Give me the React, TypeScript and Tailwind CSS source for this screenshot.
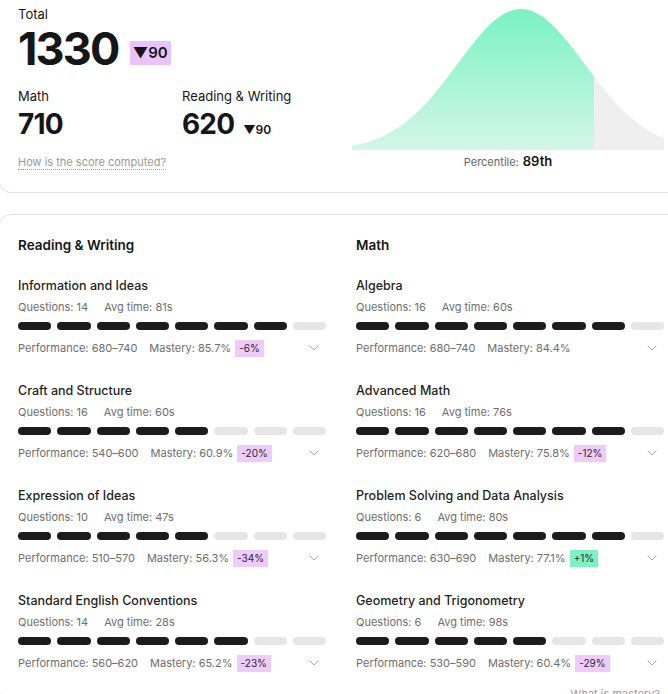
import React from 'react';
import { ChevronDown } from 'lucide-react';

interface Skill {
    name: string;
    questions: number;
    avgTime: string;
    filled: number;
    performance: string;
    mastery: string;
    delta?: string;
}

const readingWriting: Skill[] = [
    { name: 'Information and Ideas', questions: 14, avgTime: '81s', filled: 7, performance: '680–740', mastery: '85.7%', delta: '-6%' },
    { name: 'Craft and Structure', questions: 16, avgTime: '60s', filled: 5, performance: '540–600', mastery: '60.9%', delta: '-20%' },
    { name: 'Expression of Ideas', questions: 10, avgTime: '47s', filled: 5, performance: '510–570', mastery: '56.3%', delta: '-34%' },
    { name: 'Standard English Conventions', questions: 14, avgTime: '28s', filled: 6, performance: '560–620', mastery: '65.2%', delta: '-23%' },
];

const math: Skill[] = [
    { name: 'Algebra', questions: 16, avgTime: '60s', filled: 7, performance: '680–740', mastery: '84.4%' },
    { name: 'Advanced Math', questions: 16, avgTime: '76s', filled: 7, performance: '620–680', mastery: '75.8%', delta: '-12%' },
    { name: 'Problem Solving and Data Analysis', questions: 6, avgTime: '80s', filled: 7, performance: '630–690', mastery: '77.1%', delta: '+1%' },
    { name: 'Geometry and Trigonometry', questions: 6, avgTime: '98s', filled: 5, performance: '530–590', mastery: '60.4%', delta: '-29%' },
];

// bell curve: 312 x 142, mean a bit right of centre, shaded up to the percentile
const CW = 312;
const CH = 142;
const MU = 169;
const SIGMA = 64;
const CUT = 242;

const curveY = (x: number) => CH - 141 * Math.exp(-((x - MU) ** 2) / (2 * SIGMA * SIGMA));

const areaPath = (from: number, to: number) => {
    let d = `M${from} ${CH}`;
    for (let x = from; x <= to; x += 2) d += ` L${x} ${curveY(x).toFixed(2)}`;
    d += ` L${to} ${curveY(to).toFixed(2)} L${to} ${CH} Z`;
    return d;
};

const BellCurve = () => (
    <svg width={CW} height={CH} viewBox={`0 0 ${CW} ${CH}`}>
        <defs>
            <linearGradient id="pct" x1="0" y1="0" x2="0" y2="1">
                <stop offset="0%" stopColor="#7af2c2" />
                <stop offset="100%" stopColor="#d4f6e8" />
            </linearGradient>
        </defs>
        <path d={areaPath(0, CUT)} fill="url(#pct)" />
        <path d={areaPath(CUT, CW)} fill="#efefef" />
    </svg>
);

const Segments = ({ filled }: { filled: number }) => (
    <div className="flex gap-[6px]">
        {Array.from({ length: 8 }).map((_, i) => (
            <div key={i} className={`h-[8px] flex-1 rounded-full ${i < filled ? 'bg-[#1c1c1c]' : 'bg-[#e6e6e6]'}`} />
        ))}
    </div>
);

const SkillRow = ({ skill }: { skill: Skill }) => (
    <div className="flex flex-col">
        <div className="text-[12.5px] leading-4 font-medium text-[#1f1f1f]">{skill.name}</div>
        <div className="mt-[5px] flex gap-4 text-[11px] leading-4 text-[#6e6e6e]">
            <span>Questions: {skill.questions}</span>
            <span>Avg time: {skill.avgTime}</span>
        </div>
        <div className="mt-[7px]">
            <Segments filled={skill.filled} />
        </div>
        <div className="mt-[9px] flex h-[18px] items-center text-[11px] text-[#6e6e6e]">
            <span>Performance: {skill.performance}</span>
            <span className="ml-[12px]">Mastery: {skill.mastery}</span>
            {skill.delta && (
                <span
                    className={`ml-1 px-1 py-[2px] text-[10px] leading-[13px] text-[#2a2a2a] ${
                        skill.delta.startsWith('+') ? 'bg-[#7ef0c2]' : 'bg-[#eecbfb]'
                    }`}
                >
                    {skill.delta}
                </span>
            )}
            <ChevronDown size={16} strokeWidth={1.25} className="ml-auto mr-[4px] text-[#9a9a9a]" />
        </div>
    </div>
);

const SkillColumn = ({ title, skills }: { title: string; skills: Skill[] }) => (
    <div className="flex w-[308px] flex-col">
        <h3 className="text-[13.5px] leading-5 font-semibold text-[#161616]">{title}</h3>
        <div className="mt-[23px] flex flex-col gap-[26px]">
            {skills.map(s => (
                <SkillRow key={s.name} skill={s} />
            ))}
        </div>
    </div>
);

export default function App() {
    return (
        <div className="h-[694px] w-[668px] overflow-hidden bg-white font-['Inter',sans-serif] text-[#161616]">
            {/* Score summary */}
            <div className="-ml-px flex h-[193px] w-[684px] rounded-b-xl border-x border-b border-[#e4e4e4]">
                <div className="flex w-[334px] flex-col pl-[18px] pt-[6px]">
                    <div className="text-[13px] leading-4">Total</div>
                    <div className="mt-[3px] flex items-center">
                        <span className="text-[45px] leading-[48px] font-bold tracking-[-0.04em]">1330</span>
                        <span className="ml-[11px] mt-[8px] bg-[#ebc3fc] px-[3px] py-[2px] text-[15px] leading-5 font-semibold">▼90</span>
                    </div>
                    <div className="mt-[15px] flex">
                        <div className="flex w-[164px] flex-col">
                            <span className="text-[13px] leading-4">Math</span>
                            <span className="mt-[3px] text-[28px] leading-[34px] font-bold tracking-[-0.03em]">710</span>
                        </div>
                        <div className="flex flex-col">
                            <span className="text-[13px] leading-4">Reading &amp; Writing</span>
                            <div className="mt-[3px] flex items-baseline">
                                <span className="text-[28px] leading-[34px] font-bold tracking-[-0.03em]">620</span>
                                <span className="ml-[9px] text-[12px] font-semibold">▼90</span>
                            </div>
                        </div>
                    </div>
                    <span className="mt-[14px] self-start border-b border-dotted border-[#a0a0a0] text-[11px] leading-[14px] text-[#9a9a9a]">
                        How is the score computed?
                    </span>
                </div>
                <div className="ml-[18px] flex flex-col items-center pt-[8px]">
                    <BellCurve />
                    <div className="mt-[2px] flex items-baseline gap-[4px]">
                        <span className="text-[11px] text-[#666]">Percentile:</span>
                        <span className="text-[13px] font-semibold">89th</span>
                    </div>
                </div>
            </div>

            {/* Skill breakdown */}
            <div className="-ml-px mt-[21px] w-[684px] rounded-xl border border-[#e4e4e4] pl-[18px] pt-[20px]">
                <div className="flex gap-[30px]">
                    <SkillColumn title="Reading & Writing" skills={readingWriting} />
                    <SkillColumn title="Math" skills={math} />
                </div>
                <div className="mt-[14px] pr-[22px] text-right text-[11px] leading-4 text-[#9a9a9a]">What is mastery?</div>
            </div>
        </div>
    );
}
